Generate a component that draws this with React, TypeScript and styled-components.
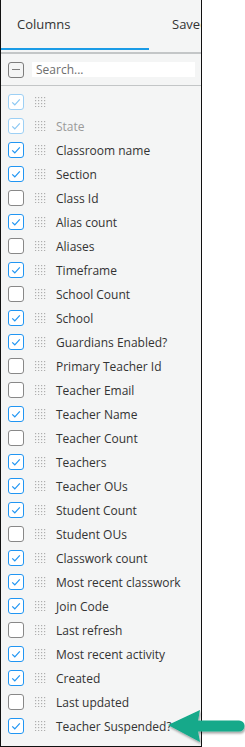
import React, {FC} from 'react';
import styled, {createGlobalStyle} from 'styled-components';

type Column = {
  label: string;
  checked: boolean;
  disabled?: boolean;
};

const columns: Column[] = [
  {label: '', checked: true, disabled: true},
  {label: 'State', checked: true, disabled: true},
  {label: 'Classroom name', checked: true},
  {label: 'Section', checked: true},
  {label: 'Class Id', checked: false},
  {label: 'Alias count', checked: true},
  {label: 'Aliases', checked: false},
  {label: 'Timeframe', checked: true},
  {label: 'School Count', checked: false},
  {label: 'School', checked: true},
  {label: 'Guardians Enabled?', checked: true},
  {label: 'Primary Teacher Id', checked: false},
  {label: 'Teacher Email', checked: false},
  {label: 'Teacher Name', checked: true},
  {label: 'Teacher Count', checked: false},
  {label: 'Teachers', checked: true},
  {label: 'Teacher OUs', checked: true},
  {label: 'Student Count', checked: true},
  {label: 'Student OUs', checked: false},
  {label: 'Classwork count', checked: true},
  {label: 'Most recent classwork', checked: true},
  {label: 'Join Code', checked: true},
  {label: 'Last refresh', checked: false},
  {label: 'Most recent activity', checked: true},
  {label: 'Created', checked: true},
  {label: 'Last updated', checked: false},
  {label: 'Teacher Suspended?', checked: true},
];

const Check: FC<{checked: boolean; disabled?: boolean}> = ({checked, disabled}) => (
  <CheckBox $checked={checked} $disabled={disabled}>
    {checked && (
      <svg width="12" height="12" viewBox="0 0 12 12">
        <path d="M2.2 6.4 L4.8 8.8 L9.8 3.4" fill="none" stroke={disabled ? '#8cc8f3' : '#2196f3'} strokeWidth="1.2" />
      </svg>
    )}
  </CheckBox>
);

const DragHandle: FC = () => (
  <Handle width="11" height="10" viewBox="0 0 11 10">
    {[0, 1, 2, 3].map(r =>
      [0, 1, 2, 3].map(c => <rect key={`${r}-${c}`} x={c * 3} y={r * 3} width="1.2" height="1.2" fill="#aeaeae" />)
    )}
  </Handle>
);

const Arrow: FC = () => (
  <ArrowSvg width="80" height="42" viewBox="0 0 80 42">
    <defs>
      <filter id="sh" x="-20%" y="-30%" width="140%" height="170%">
        <feDropShadow dx="1" dy="2" stdDeviation="1.2" floodColor="#000" floodOpacity="0.35" />
      </filter>
    </defs>
    <path
      d="M3 19 L35 4 L33 14.5 L74 14.5 A5.5 5.5 0 0 1 74 25.5 L33 25.5 L35 36 Z"
      fill="#12a98a"
      filter="url(#sh)"
    />
  </ArrowSvg>
);

const App: FC = () => {
  return (
    <Page>
      <GlobalStyle />
      <Panel>
        <TabBar>
          <Tab $active>Columns</Tab>
          <Tab>Saved</Tab>
        </TabBar>
        <SearchRow>
          <MinusBox />
          <SearchInput type="text" placeholder="Search..." />
        </SearchRow>
        <List>
          {columns.map((col, i) => (
            <Row key={i}>
              <Check checked={col.checked} disabled={col.disabled} />
              <DragHandle />
              <Label $disabled={col.disabled}>{col.label}</Label>
            </Row>
          ))}
        </List>
      </Panel>
      <Arrow />
    </Page>
  );
};

export default App;

const GlobalStyle = createGlobalStyle`
  html, body {
    margin: 0;
    padding: 0;
    background: #fff;
  }
  body {
    font-family: "Open Sans", "Liberation Sans", sans-serif;
  }
`

const Page = styled.div`
  position: relative;
  width: 245px;
  height: 747px;
  overflow: hidden;
  display: flex;
`

const Panel = styled.div`
  width: 202px;
  height: 747px;
  box-sizing: border-box;
  background: #f4f5f5;
  border-left: 1px solid #111;
  border-right: 1px solid #111;
  border-bottom: 1px solid #111;
  display: flex;
  flex-direction: column;
  overflow: hidden;
`

const TabBar = styled.div`
  display: flex;
  height: 52px;
  flex-shrink: 0;
  border-bottom: 2px solid #c3c6c7;
  margin-left: -1px;
`

const Tab = styled.div<{$active?: boolean}>`
  box-sizing: border-box;
  height: 50px;
  flex-shrink: 0;
  width: ${p => (p.$active ? '149px' : 'auto')};
  padding-left: ${p => (p.$active ? '17px' : '23px')};
  display: flex;
  align-items: center;
  font-size: 13px;
  color: #333;
  white-space: nowrap;
  border-bottom: 2px solid ${p => (p.$active ? '#1a9be6' : 'transparent')};
`

const SearchRow = styled.div`
  display: flex;
  align-items: center;
  gap: 8px;
  height: 31px;
  flex-shrink: 0;
  padding-left: 7px;
  border-bottom: 1px solid #c3c6c7;
`

const MinusBox = styled.div`
  position: relative;
  width: 16px;
  height: 16px;
  box-sizing: border-box;
  border: 1px solid #7d7d7d;
  border-radius: 3px;
  background: #f4f5f5;

  &::after {
    content: '';
    position: absolute;
    left: 3px;
    right: 3px;
    top: 6px;
    height: 1.5px;
    background: #7d7d7d;
  }
`

const SearchInput = styled.input`
  width: 163px;
  height: 15px;
  box-sizing: border-box;
  border: none;
  outline: none;
  padding: 0 0 0 4px;
  background: #fff;
  font-family: "Open Sans", "Liberation Sans", sans-serif;
  font-size: 12px;
  color: #333;

  &::placeholder {
    color: #6e6e6e;
  }
`

const List = styled.div`
  display: flex;
  flex-direction: column;
  padding-top: 4px;
`

const Row = styled.div`
  display: flex;
  align-items: center;
  height: 24px;
  padding-left: 7px;
`

const CheckBox = styled.div<{$checked: boolean; $disabled?: boolean}>`
  width: 16px;
  height: 16px;
  box-sizing: border-box;
  border-radius: 3px;
  background: #fff;
  display: flex;
  align-items: center;
  justify-content: center;
  flex-shrink: 0;
  border: ${p =>
    p.$disabled ? '1.5px solid #9dd0f5' : p.$checked ? '1.5px solid #2196f3' : '1px solid #888'};
`

const Handle = styled.svg`
  margin-left: 11px;
  flex-shrink: 0;
`

const Label = styled.span<{$disabled?: boolean}>`
  margin-left: 10px;
  font-size: 12px;
  color: ${p => (p.$disabled ? '#9a9a9a' : '#333')};
  white-space: nowrap;
`

const ArrowSvg = styled.svg`
  position: absolute;
  left: 165px;
  top: 706px;
`
